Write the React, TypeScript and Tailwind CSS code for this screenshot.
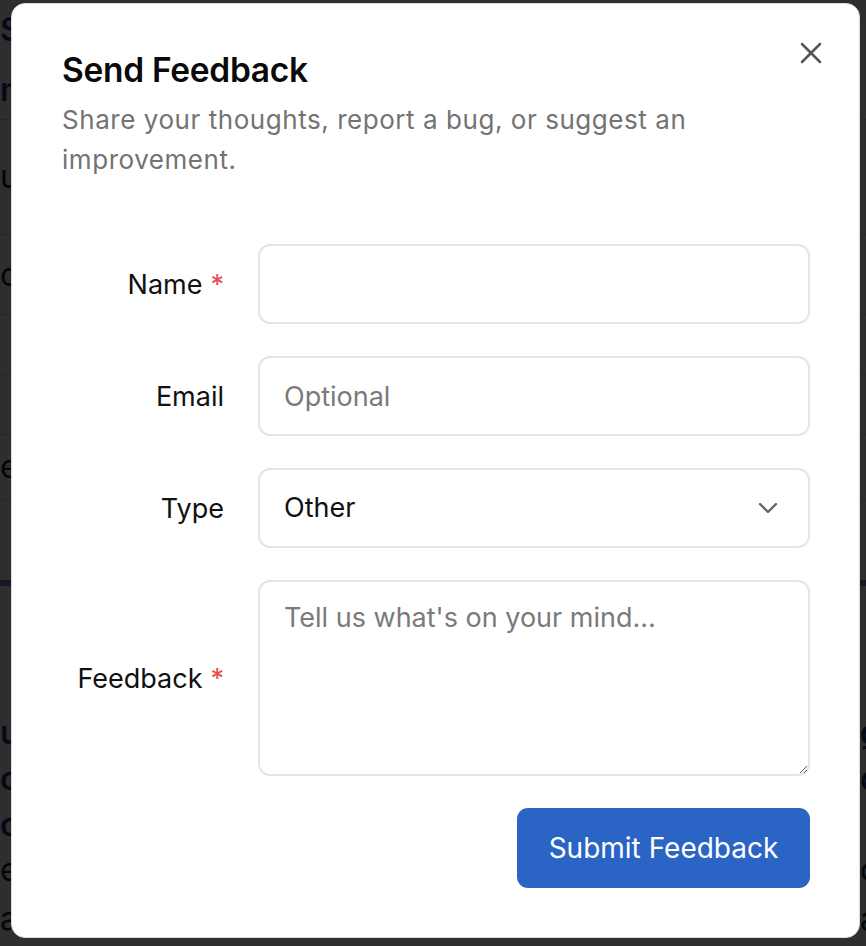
import React from "react";

const font = { fontFamily: "Inter, 'Noto Sans', sans-serif" };

type Row = { h: number; left?: string; right?: string; navy?: boolean; bar?: boolean; border?: boolean };

function BackgroundPage() {
  const rows: Row[] = [
    { h: 60, left: "Sc", navy: true },
    { h: 60, left: "nn", navy: true, border: true },
    { h: 115, left: "u", border: true },
    { h: 80, left: "oc", border: true },
    { h: 60, border: true },
    { h: 60, border: true },
    { h: 65, left: "ev", border: true },
    { h: 80 },
    { h: 6, bar: true },
    { h: 124 },
    { h: 46, left: "u", right: "g", navy: true },
    { h: 46, left: "c", right: "c", navy: true },
    { h: 46, left: "o", navy: true },
    { h: 44, left: "e", right: "c" },
    { h: 54, left: "a", right: "a" },
  ];
  return (
    <div className="w-full h-[946px] bg-white overflow-hidden flex flex-col">
      {rows.map((r, i) => (
        <div
          key={i}
          className={`flex justify-between items-center shrink-0 ${r.border ? "border-b border-[#cfcfcf]" : ""} ${r.bar ? "bg-[#7d8cc0]" : ""}`}
          style={{ height: r.h }}
        >
          <div className={`w-[11px] overflow-hidden whitespace-nowrap text-[32px] leading-none ${r.navy ? "text-[#1e3a8a] font-semibold" : "text-[#222]"}`}>
            {r.left ?? ""}
          </div>
          <div className={`w-[6px] overflow-hidden whitespace-nowrap text-[32px] leading-none ${r.navy ? "text-[#1e3a8a] font-semibold" : "text-[#222]"}`}>
            {r.right ?? ""}
          </div>
        </div>
      ))}
    </div>
  );
}

function Label({ children, required }: { children: React.ReactNode; required?: boolean }) {
  return (
    <div className="w-[162px] shrink-0 text-right text-[27px] text-[#111] leading-none">
      {children}
      {required && <span className="text-[#e5484d] ml-[8px]">*</span>}
    </div>
  );
}

export default function App() {
  return (
    <div className="relative w-[866px] h-[946px] overflow-hidden" style={font}>
      <BackgroundPage />
      <div className="absolute inset-0 bg-black/[0.82]" />
      <div className="absolute left-[11px] top-[3px] w-[849px] h-[935px] bg-white rounded-[14px] border border-[#dcdcdc] pt-[44px] pl-[50px] pr-[49px]">
        <button className="absolute right-[35px] top-[36px] w-[26px] h-[26px] flex items-center justify-center">
          <svg width="22" height="22" viewBox="0 0 22 22" fill="none" stroke="#555" strokeWidth="2.5" strokeLinecap="round">
            <path d="M2 2 L20 20" />
            <path d="M20 2 L2 20" />
          </svg>
        </button>
        <h2 className="text-[33.5px] leading-[44px] font-semibold text-[#0a0a0a] tracking-[-0.3px]">Send Feedback</h2>
        <p className="mt-[8px] text-[26px] leading-[40px] text-[#737373] tracking-[0.55px] w-[680px]">
          Share your thoughts, report a bug, or suggest an improvement.
        </p>
        <div className="mt-[64px] flex flex-col gap-[32px]">
          <div className="flex items-center gap-[34px]">
            <Label required>Name</Label>
            <input className="w-[552px] h-[80px] rounded-[12px] border-2 border-[#e5e5e5] px-[24px] text-[27px] outline-none" />
          </div>
          <div className="flex items-center gap-[34px]">
            <Label>Email</Label>
            <input
              placeholder="Optional"
              className="w-[552px] h-[80px] rounded-[12px] border-2 border-[#e5e5e5] px-[24px] text-[27px] outline-none placeholder:text-[#7a7a7a]"
            />
          </div>
          <div className="flex items-center gap-[34px]">
            <Label>Type</Label>
            <div className="w-[552px] h-[80px] rounded-[12px] border-2 border-[#e5e5e5] px-[24px] flex items-center justify-between">
              <span className="text-[27px] text-[#111]">Other</span>
              <svg width="20" height="12" viewBox="0 0 20 12" fill="none" stroke="#666" strokeWidth="2.4" strokeLinecap="round" strokeLinejoin="round" className="mr-[6px]">
                <path d="M2 2 L10 10 L18 2" />
              </svg>
            </div>
          </div>
          <div className="flex items-center gap-[34px]">
            <Label required>Feedback</Label>
            <textarea
              placeholder="Tell us what's on your mind..."
              className="w-[552px] h-[196px] rounded-[12px] border-2 border-[#e5e5e5] px-[24px] py-[18px] text-[27px] leading-[36px] outline-none placeholder:text-[#7a7a7a]"
            />
          </div>
        </div>
        <div className="mt-[32px] flex justify-end">
          <button className="w-[293px] h-[80px] rounded-[11px] bg-[#2a64c5] text-white text-[28px] font-normal">
            Submit Feedback
          </button>
        </div>
      </div>
    </div>
  );
}
